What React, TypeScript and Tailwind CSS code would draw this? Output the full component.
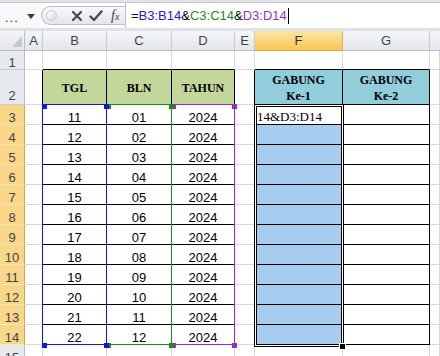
import React from "react";

const COLS = ["A", "B", "C", "D", "E", "F", "G", "H"];
const TGL = ["11", "12", "13", "14", "15", "16", "17", "18", "19", "20", "21", "22"];
const BLN = ["01", "02", "03", "04", "05", "06", "07", "08", "09", "10", "11", "12"];

const sans = "font-['Liberation_Sans',Arial,sans-serif]";
const serif = "font-['Liberation_Serif','Times_New_Roman',serif]";

function FormulaBar() {
  return (
    <div className="h-[31px] bg-[#dfe3e8] pt-[2px] pb-[3px]">
      <div className={`flex h-full border-t border-[#c4c9d0] bg-white ${sans}`}>
        {/* name box, squeezed */}
        <div className="flex w-[41px] items-center bg-[#f7f8f9]">
          <span className="ml-[5px] mt-[4px] text-[13px] leading-none tracking-[1px] text-[#333]">...</span>
          <svg width="8" height="5" viewBox="0 0 8 5" className="ml-[8px] mt-[1px]">
            <path d="M0 0 H8 L4 5 Z" fill="#3a3a3a" />
          </svg>
        </div>
        {/* buttons */}
        <div className="my-[3px] flex w-[84px] items-center rounded-l-full border border-r-0 border-[#b9c0c9] bg-gradient-to-b from-[#f7f8fa] to-[#e3e6ea]">
          <div className="ml-[4px] h-[11px] w-[11px] rounded-full border border-[#c3c8cf] bg-gradient-to-br from-white to-[#d6dadf]" />
          <svg width="12" height="12" viewBox="0 0 12 12" className="ml-[14px]">
            <path d="M2 2 L10 10 M10 2 L2 10" stroke="#4a4a4a" strokeWidth="2.2" strokeLinecap="round" />
          </svg>
          <svg width="14" height="12" viewBox="0 0 14 12" className="ml-[6px]">
            <path d="M1.5 6.5 L5 10 L12.5 1.5" stroke="#4a4a4a" strokeWidth="2.4" fill="none" strokeLinecap="round" strokeLinejoin="round" />
          </svg>
          <span className={`ml-[8px] ${serif} text-[14px] italic leading-none text-[#444]`}>
            f<span className="text-[10px]">x</span>
          </span>
        </div>
        {/* input */}
        <div className="flex flex-1 items-center border-l border-[#b9c0c9] pl-[5px] text-[13px] leading-[13px]">
          <span className="text-black">=</span>
          <span className="text-[#2020d0]">B3:B14</span>
          <span className="text-black">&amp;</span>
          <span className="text-[#1d8a1d]">C3:C14</span>
          <span className="text-black">&amp;</span>
          <span className="text-[#9a2ec4]">D3:D14</span>
          <span className="ml-[1px] h-[16px] w-px bg-black" />
        </div>
      </div>
    </div>
  );
}

function cellClass(c: number, r: number) {
  const rightBlack = r >= 2 && r <= 14 && c <= 7;
  const bottomBlack = r >= 1 && r <= 14 && [2, 3, 4, 6, 7].includes(c);
  let bg = "bg-white";
  if (r === 2 && c >= 2 && c <= 4) bg = "bg-[#c4d79b]";
  if (r === 2 && (c === 6 || c === 7)) bg = "bg-[#92cddc]";
  if (c === 6 && r >= 4 && r <= 14) bg = "bg-[#a6cdf0]";
  return [
    "flex border-r border-b",
    rightBlack ? "border-r-black" : "border-r-[#d9d9d9]",
    bottomBlack ? "border-b-black" : "border-b-[#d9d9d9]",
    bg,
  ].join(" ");
}

function cellContent(c: number, r: number) {
  if (r === 2) {
    const heads: Record<number, string[]> = {
      2: ["TGL"],
      3: ["BLN"],
      4: ["TAHUN"],
      6: ["GABUNG", "Ke-1"],
      7: ["GABUNG", "Ke-2"],
    };
    const h = heads[c];
    if (!h) return null;
    return (
      <div className={`flex w-full flex-col items-center justify-center pt-[2px] ${serif} text-[12px] font-bold leading-[16px] text-black`}>
        {h.map((t, i) => (
          <span key={i}>{t}</span>
        ))}
      </div>
    );
  }
  if (r >= 3 && r <= 14) {
    const i = r - 3;
    const val = c === 2 ? TGL[i] : c === 3 ? BLN[i] : c === 4 ? "2024" : null;
    if (val)
      return (
        <div className={`flex w-full items-end justify-center ${sans} text-[13px] leading-[13px] text-black`}>{val}</div>
      );
    if (c === 6 && r === 3)
      return (
        <div className={`flex w-full items-end pl-[2px] pb-[1px] ${serif} text-[13px] leading-[13px] text-black`}>
          14&amp;D3:D14
        </div>
      );
  }
  return null;
}

function Handle({ x, y, color }: { x: number; y: number; color: string }) {
  return <div className={`absolute h-[5px] w-[5px] ${color}`} style={{ left: x, top: y }} />;
}

function RangeBox({ l, r, color, sq }: { l: number; r: number; color: string; sq: string }) {
  const top = 73;
  const bottom = 313;
  return (
    <>
      <div
        className={`pointer-events-none absolute border ${color}`}
        style={{ left: l, top, width: r - l + 1, height: bottom - top + 1 }}
      />
      <Handle x={l} y={top} color={sq} />
      <Handle x={r - 2} y={top} color={sq} />
      <Handle x={l} y={bottom - 1} color={sq} />
      <Handle x={r - 2} y={bottom - 1} color={sq} />
    </>
  );
}

function Sheet() {
  const rows = Array.from({ length: 15 }, (_, i) => i + 1);
  return (
    <div className={`relative grid grid-cols-[25px_18px_64px_65px_63px_20px_88px_87px_1fr] grid-rows-[20px_19px_35px_repeat(12,20px)_20px] ${sans}`}>
      {/* corner */}
      <div className="relative border-r border-b border-[#b8bec6] bg-gradient-to-b from-[#f3f5f7] to-[#e2e6ea]">
        <svg width="25" height="20" viewBox="0 0 25 20" className="absolute left-0 top-0">
          <path d="M22 5 L22 16 L12 16 Z" fill="#c2c8cf" />
        </svg>
      </div>
      {COLS.map((l, i) =>
        l === "F" ? (
          <div
            key={l}
            className="flex items-center justify-center border-r border-b border-r-[#e3b24f] border-b-[#d9a53c] bg-gradient-to-b from-[#fde6a3] to-[#f6c655] text-[13px] text-[#333]"
          >
            {l}
          </div>
        ) : (
          <div
            key={l}
            className={`flex items-center justify-center border-r border-b border-r-[#c6cbd2] border-b-[#b8bec6] bg-gradient-to-b from-[#f4f6f8] to-[#e3e7eb] text-[13px] text-[#444] ${i === 7 ? "border-r-0" : ""}`}
          >
            {i === 7 ? "" : l}
          </div>
        )
      )}
      {rows.map((r) => (
        <React.Fragment key={r}>
          <div
            className={`flex items-end justify-center border-r border-b text-[13px] leading-[13px] text-[#444] ${
              r >= 3 && r <= 14
                ? "border-r-[#d9a53c] border-b-[#fbe6b0] bg-[#f8d68a]"
                : "border-r-[#b8bec6] border-b-[#c6cbd2] bg-[#e6e9ed]"
            } ${r === 2 ? "pb-[2px]" : ""}`}
          >
            {r}
          </div>
          {COLS.map((_, ci) => {
            const c = ci + 1;
            return (
              <div key={c} className={cellClass(c, r)}>
                {cellContent(c, r)}
              </div>
            );
          })}
        </React.Fragment>
      ))}

      {/* formula range highlights */}
      <RangeBox l={171} r={234} color="border-[#9a2ec4]" sq="bg-[#9a2ec4]" />
      <RangeBox l={106} r={171} color="border-[#1d8a1d]" sq="bg-[#1d8a1d]" />
      <RangeBox l={42} r={106} color="border-[#1515d8]" sq="bg-[#1515d8]" />

      {/* selection F3:F14 */}
      <div
        className="pointer-events-none absolute border border-black shadow-[inset_0_0_0_1px_white,inset_0_0_0_2px_black]"
        style={{ left: 254, top: 73, width: 90, height: 243 }}
      />
      <div className="absolute h-[5px] w-[5px] bg-black outline outline-1 outline-white" style={{ left: 340, top: 313 }} />
    </div>
  );
}

export default function App() {
  return (
    <div className="h-[356px] w-[440px] overflow-hidden bg-white">
      <FormulaBar />
      <Sheet />
    </div>
  );
}
